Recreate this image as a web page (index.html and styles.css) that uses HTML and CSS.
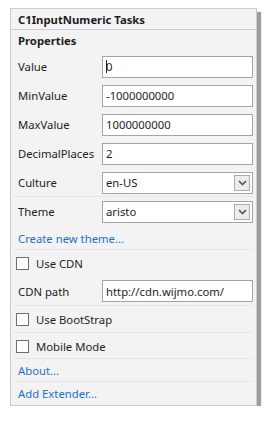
FILE: index.html
```html
<!DOCTYPE html>
<html lang="en">
<head>
  <meta charset="UTF-8">
  <title>C1InputNumeric Tasks</title>
  <link rel="stylesheet" href="styles.css">
</head>
<body>

  <div class="panel">
    <div class="panel-title">C1InputNumeric Tasks</div>
    <div class="section-title">Properties</div>

    <div class="row first">
      <span class="label">Value</span>
      <div class="field"><span class="caret"></span>0</div>
    </div>
    <div class="row">
      <span class="label">MinValue</span>
      <div class="field">-1000000000</div>
    </div>
    <div class="row">
      <span class="label">MaxValue</span>
      <div class="field">1000000000</div>
    </div>
    <div class="row">
      <span class="label">DecimalPlaces</span>
      <div class="field">2</div>
    </div>
    <div class="row sep">
      <span class="label">Culture</span>
      <div class="field select">
        <span>en-US</span>
        <span class="drop"><svg width="9" height="6" viewBox="0 0 9 6"><path d="M1 1 L4.5 4.5 L8 1" fill="none" stroke="#555" stroke-width="1.6"/></svg></span>
      </div>
    </div>
    <div class="row">
      <span class="label">Theme</span>
      <div class="field select">
        <span>aristo</span>
        <span class="drop"><svg width="9" height="6" viewBox="0 0 9 6"><path d="M1 1 L4.5 4.5 L8 1" fill="none" stroke="#555" stroke-width="1.6"/></svg></span>
      </div>
    </div>

    <div class="link-row sep">Create new theme...</div>

    <div class="check-row">
      <span class="box"></span>
      <span>Use CDN</span>
    </div>
    <div class="row cdn sep">
      <span class="label">CDN path</span>
      <div class="field">http://cdn.wijmo.com/</div>
    </div>
    <div class="check-row sep">
      <span class="box"></span>
      <span>Use BootStrap</span>
    </div>
    <div class="check-row mobile sep">
      <span class="box"></span>
      <span>Mobile Mode</span>
    </div>

    <div class="link-row small sep">About...</div>
    <div class="link-row small">Add Extender...</div>
  </div>

</body>
</html>
```

FILE: styles.css
```css
* {
  box-sizing: border-box;
}

body {
  margin: 0;
  background: #ffffff;
  font-family: "Segoe UI", "Noto Sans", Arial, sans-serif;
  font-size: 11.3px;
  color: #1e1e1e;
}

.panel {
  margin: 8px 0 0 10px;
  width: 247px;
  background: #f3f3f3;
  border: 1px solid #c9c9dc;
  box-shadow: 4px 4px 1px rgba(0, 0, 0, 0.38);
}

.panel-title {
  height: 21px;
  padding-left: 7px;
  display: flex;
  align-items: center;
  font-weight: bold;
  border-bottom: 1px solid #c9c9dc;
}

.section-title {
  height: 21px;
  padding-left: 7px;
  display: flex;
  align-items: center;
  font-weight: bold;
}

.row {
  height: 29px;
  padding: 0 2px 0 7px;
  display: flex;
  align-items: center;
}

.row.first {
  height: 30px;
  padding-top: 1px;
}

.row.cdn {
  padding-bottom: 1px;
}

/* faint divider line that does not touch the panel edges */
.sep {
  background: linear-gradient(#e4e4ea, #e4e4ea) no-repeat 2px 100% / calc(100% - 5px) 1px;
}

.label {
  width: 84px;
}

.field {
  width: 151px;
  height: 22px;
  background: #ffffff;
  border: 1px solid #a5a5a5;
  padding-left: 3px;
  display: flex;
  align-items: center;
}

.caret {
  width: 1px;
  height: 13px;
  background: #1e1e1e;
  margin-right: -1px;
}

.field.select {
  justify-content: space-between;
  padding-right: 2px;
}

.drop {
  width: 16px;
  height: 16px;
  border: 1px solid #acacac;
  background: #ececec;
  display: flex;
  align-items: center;
  justify-content: center;
}

.link-row {
  height: 24px;
  padding-left: 7px;
  display: flex;
  align-items: center;
  color: #1e6fcc;
}

.link-row.small {
  height: 23px;
}

.check-row {
  height: 27px;
  padding-left: 5px;
  display: flex;
  align-items: center;
  gap: 7px;
}

.check-row.mobile {
  height: 26px;
}

.box {
  width: 13px;
  height: 13px;
  border: 1px solid #6f6f6f;
  background: #ffffff;
}
```
